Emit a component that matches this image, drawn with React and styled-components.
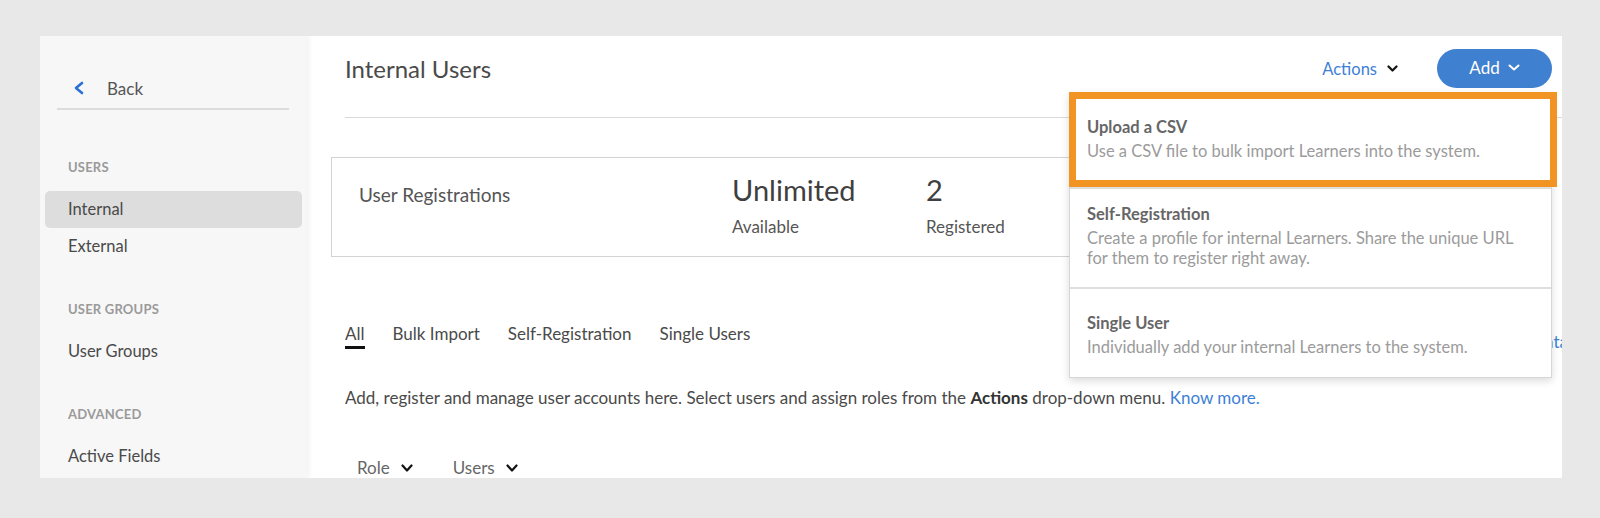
import React from 'react';
import styled, { createGlobalStyle } from 'styled-components';

const GlobalStyle = createGlobalStyle`
  body {
    margin: 0;
    background: #e8e8e8;
    font-family: Lato, "Open Sans", sans-serif;
    color: #4a4a4a;
  }
  * { box-sizing: border-box; }
`;

const Page = styled.div`
  padding: 36px 38px 40px 40px;
`;

const Panel = styled.div`
  display: flex;
  width: 1522px;
  height: 442px;
  background: #fff;
  overflow: hidden;
`;

const Sidebar = styled.aside`
  position: relative;
  z-index: 1;
  width: 267px;
  flex-shrink: 0;
  background: #f7f7f7;
  padding: 40px 5px 0;
  box-shadow: 2px 0 5px rgba(0, 0, 0, 0.06);
`;

const BackRow = styled.div`
  display: flex;
  align-items: center;
  gap: 23px;
  height: 24px;
  margin: 0 13px 0 12px;
  padding-left: 16px;
  box-sizing: content-box;
  padding-bottom: 8px;
  border-bottom: 2px solid #dcdcdc;
  font-size: 17px;
  color: #555;
`;

const SectionLabel = styled.div`
  margin-top: ${p => p.$top}px;
  margin-bottom: 16px;
  padding-left: 23px;
  font-size: 13px;
  line-height: 16px;
  font-weight: 700;
  color: #9a9a9a;
  letter-spacing: 0.2px;
`;

const NavItem = styled.div`
  display: flex;
  align-items: center;
  height: 37px;
  padding-left: 23px;
  padding-bottom: 2px;
  border-radius: 5px;
  font-size: 16.5px;
  color: #4a4a4a;
  background: ${p => (p.$active ? '#dddddd' : 'transparent')};
`;

const Main = styled.main`
  position: relative;
  flex: 1;
  padding: 0 10px 0 38px;
  overflow: hidden;
`;

const Header = styled.div`
  display: flex;
  align-items: center;
  height: 39px;
  margin-top: 13px;
`;

const Title = styled.h1`
  margin: 0;
  font-size: 24px;
  font-weight: 400;
  color: #4a4a4a;
`;

const HeaderActions = styled.div`
  display: flex;
  align-items: center;
  margin-left: auto;
`;

const ActionsLink = styled.span`
  display: flex;
  align-items: center;
  gap: 10px;
  font-size: 16.5px;
  color: #3d7fd6;
`;

const AddButton = styled.button`
  display: flex;
  align-items: center;
  justify-content: center;
  gap: 8px;
  width: 115px;
  height: 39px;
  margin-left: 39px;
  border: 0;
  border-radius: 20px;
  background: #3f80d0;
  color: #fff;
  font-family: inherit;
  font-size: 17px;
  padding-bottom: 3px;
`;

const Divider = styled.hr`
  margin: 29px -10px 0 0;
  border: 0;
  border-top: 1px solid #d9d9d9;
`;

const StatsCard = styled.section`
  display: flex;
  align-items: flex-start;
  height: 100px;
  margin: 39px 0 0 -14px;
  padding: 14px 27px;
  border: 1px solid #d3d3d3;
`;

const CardLabel = styled.div`
  width: 373px;
  margin-top: 11px;
  font-size: 19px;
  line-height: 24px;
  color: #555;
`;

const Stat = styled.div`
  width: ${p => p.$w}px;
  display: flex;
  flex-direction: column;
  gap: 9px;
`;

const StatValue = styled.div`
  font-size: 29px;
  line-height: 36px;
  color: #3f3f3f;
`;

const StatCaption = styled.div`
  font-size: 17px;
  line-height: 20px;
  color: #555;
`;

const Tabs = styled.nav`
  display: flex;
  gap: 28px;
  margin-top: 67px;
`;

const Tab = styled.div`
  font-size: 17px;
  line-height: 20px;
  padding-bottom: 3px;
  color: #4a4a4a;
  &::after {
    content: '';
    display: block;
    height: 3px;
    margin-top: 2px;
    background: ${p => (p.$active ? '#111' : 'transparent')};
  }
`;

const TabsLink = styled.span`
  align-self: flex-end;
  margin-left: auto;
  margin-right: -16px;
  font-size: 17px;
  line-height: 20px;
  color: #3d7fd6;
`;

const Description = styled.p`
  margin: 36px 0 0;
  font-size: 17px;
  line-height: 20px;
  color: #4a4a4a;
  b { color: #333; }
  a { color: #3d7fd6; text-decoration: none; }
`;

const Filters = styled.div`
  display: flex;
  gap: 40px;
  margin-top: 50px;
  padding-left: 12px;
`;

const Filter = styled.span`
  display: flex;
  align-items: center;
  gap: 11px;
  font-size: 17px;
  line-height: 20px;
  color: #666;
`;

const Menu = styled.div`
  position: absolute;
  top: 56px;
  left: 762px;
  width: 483px;
  background: #fff;
  border: 1px solid #d6d6d6;
  box-shadow: 0 3px 8px rgba(0, 0, 0, 0.14);
`;

const MenuItem = styled.div`
  position: relative;
  padding: ${p => p.$pad};
  border-top: ${p => (p.$first ? 'none' : '2px solid #dedede')};
  &::after {
    content: '';
    display: ${p => (p.$highlight ? 'block' : 'none')};
    position: absolute;
    top: -1px;
    left: -1px;
    right: -6px;
    bottom: 0;
    border: 7px solid #f29423;
  }
`;

const MenuTitle = styled.div`
  font-size: 16.5px;
  line-height: 22px;
  font-weight: 700;
  color: #666;
  margin-bottom: 3px;
`;

const MenuDesc = styled.div`
  font-size: 16.5px;
  line-height: 20px;
  color: #9b9b9b;
`;

function Chevron({ dir = 'down', color = '#111', w = 11, h = 7, stroke = 2.2 }) {
  const d = dir === 'left'
    ? `M${w - 2} 2 L3 ${h / 2} L${w - 2} ${h - 2}`
    : `M1.5 1.5 L${w / 2} ${h - 1.5} L${w - 1.5} 1.5`;
  return (
    <svg width={w} height={h} viewBox={`0 0 ${w} ${h}`} fill="none">
      <path d={d} stroke={color} strokeWidth={stroke} strokeLinecap="round" strokeLinejoin="round" />
    </svg>
  );
}

const addOptions = [
  {
    title: 'Upload a CSV',
    desc: 'Use a CSV file to bulk import Learners into the system.',
    highlight: true,
    pad: '23px 17px 26px',
  },
  {
    title: 'Self-Registration',
    desc: 'Create a profile for internal Learners. Share the unique URL for them to register right away.',
    pad: '14px 17px 19px',
  },
  {
    title: 'Single User',
    desc: 'Individually add your internal Learners to the system.',
    pad: '23px 17px 20px',
  },
];

export default function App() {
  return (
    <Page>
      <GlobalStyle />
      <Panel>
        <Sidebar>
          <BackRow>
            <Chevron dir="left" color="#2a6fd6" w={11} h={14} stroke={2.6} />
            <span>Back</span>
          </BackRow>
          <SectionLabel $top={49}>USERS</SectionLabel>
          <NavItem $active>Internal</NavItem>
          <NavItem>External</NavItem>
          <SectionLabel $top={36}>USER GROUPS</SectionLabel>
          <NavItem>User Groups</NavItem>
          <SectionLabel $top={36}>ADVANCED</SectionLabel>
          <NavItem>Active Fields</NavItem>
        </Sidebar>

        <Main>
          <Header>
            <Title>Internal Users</Title>
            <HeaderActions>
              <ActionsLink>
                Actions
                <Chevron />
              </ActionsLink>
              <AddButton>
                Add
                <Chevron color="#fff" w={12} h={7} stroke={2} />
              </AddButton>
            </HeaderActions>
          </Header>
          <Divider />

          <StatsCard>
            <CardLabel>User Registrations</CardLabel>
            <Stat $w={194}>
              <StatValue>Unlimited</StatValue>
              <StatCaption>Available</StatCaption>
            </Stat>
            <Stat $w={150}>
              <StatValue>2</StatValue>
              <StatCaption>Registered</StatCaption>
            </Stat>
          </StatsCard>

          <Tabs>
            <Tab $active>All</Tab>
            <Tab>Bulk Import</Tab>
            <Tab>Self-Registration</Tab>
            <Tab>Single Users</Tab>
            <TabsLink>Export data</TabsLink>
          </Tabs>

          <Description>
            Add, register and manage user accounts here. Select users and assign roles from the <b>Actions</b> drop-down menu. <a href="#">Know more.</a>
          </Description>

          <Filters>
            <Filter>Role <Chevron w={12} h={8} /></Filter>
            <Filter>Users <Chevron w={12} h={8} /></Filter>
          </Filters>

          <Menu>
            {addOptions.map((o, i) => (
              <MenuItem key={o.title} $first={i === 0} $highlight={o.highlight} $pad={o.pad}>
                <MenuTitle>{o.title}</MenuTitle>
                <MenuDesc>{o.desc}</MenuDesc>
              </MenuItem>
            ))}
          </Menu>
        </Main>
      </Panel>
    </Page>
  );
}
